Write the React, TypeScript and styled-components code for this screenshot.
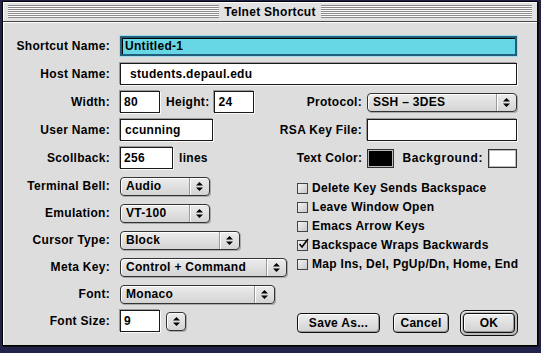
import React from "react";
import styled, { createGlobalStyle } from "styled-components";

const GlobalStyle = createGlobalStyle`
  html, body {
    margin: 0;
    padding: 0;
    background: #22234a;
  }
  body {
    width: 541px;
    height: 353px;
    overflow: hidden;
    font-family: "Liberation Sans", Arial, sans-serif;
    font-size: 12px;
    font-weight: bold;
    letter-spacing: 0.3px;
    color: #000;
  }
`;

const Window = styled.div`
  margin: 1px 0 0 2px;
  width: 534px;
  height: 343px;
  background: #dddddd;
  border: 1px solid #000;
  box-shadow: 1px 1px 0 #111;
  display: flex;
  flex-direction: column;
`;

const TitleBar = styled.div`
  height: 19px;
  border-bottom: 1px solid #444;
  background: #e2e2e2;
  display: flex;
  align-items: center;
  gap: 3px;
  padding: 0 5px;
  box-shadow: inset 1px 1px 0 #fff;
`;

const Stripes = styled.div`
  flex: 1;
  height: 13px;
  background: repeating-linear-gradient(to bottom, #8c8c8c 0 1px, #fbfbfb 1px 2px);
`;

const Title = styled.div`
  font-size: 12px;
  padding: 0 2px;
`;

const Content = styled.div`
  flex: 1;
  display: flex;
  flex-direction: column;
  padding: 12px 20px 0 6px;
  gap: 4px;
  box-shadow: inset 1px 1px 0 #fff;
`;

const Row = styled.div`
  height: 24px;
  display: flex;
  align-items: center;
`;

const Label = styled.div`
  width: 101px;
  flex: none;
  text-align: right;
  margin-right: 10px;
  white-space: nowrap;
`;

const InlineLabel = styled.span`
  margin: 0 5px 0 6px;
  white-space: nowrap;
`;

const Field = styled.div<{ $w?: number; $indent?: number; $focus?: boolean }>`
  ${(p) => (p.$w ? `width: ${p.$w}px; flex: none;` : "flex: 1;")}
  height: ${(p) => (p.$focus ? 20 : 22)}px;
  box-sizing: border-box;
  display: flex;
  align-items: center;
  padding-left: ${(p) => p.$indent ?? 3}px;
  background: ${(p) => (p.$focus ? "#67d7e6" : "#fff")};
  border: ${(p) => (p.$focus ? "2px solid #1f5f7c" : "1px solid #1a1a1a")};
  box-shadow: ${(p) => (p.$focus ? "0 0 0 1px #9fdbe8, inset 1px 1px 0 #000" : "1px 1px 0 #fafafa, -1px -1px 0 #9a9a9a")};
  white-space: nowrap;
`;

const RightPair = styled.div`
  margin-left: auto;
  display: flex;
  align-items: center;
  gap: 5px;
`;

const Swatch = styled.div<{ $color: string; $w: number }>`
  width: ${(p) => p.$w}px;
  height: 19px;
  box-sizing: border-box;
  background: ${(p) => p.$color};
  border: 1px solid #333;
  box-shadow: inset 0 0 0 1px #bbb;
`;

const SwatchLabel = styled.span`
  margin-left: 3px;
  letter-spacing: 0.6px;
`;

const Lower = styled.div`
  display: flex;
`;

const LeftCol = styled.div`
  display: flex;
  flex-direction: column;
  gap: 3px;
`;

const RightCol = styled.div`
  margin-left: auto;
  margin-right: -3px;
  width: 223px;
  display: flex;
  flex-direction: column;
  padding-top: 4px;
`;

const Popup = styled.div<{ $w: number }>`
  width: ${(p) => p.$w}px;
  height: 19px;
  box-sizing: border-box;
  border: 1px solid #333;
  border-radius: 4px;
  background: linear-gradient(#ececec, #d4d4d4);
  box-shadow: inset 1px 1px 0 #fff, 1px 1px 0 #aaa;
  display: flex;
  align-items: center;
  white-space: nowrap;
`;

const PopupText = styled.div`
  flex: 1;
  padding-left: 5px;
`;

const ArrowBox = styled.div<{ $plain?: boolean }>`
  width: 19px;
  align-self: stretch;
  border-left: ${(p) => (p.$plain ? "none" : "1px solid #999")};
  box-shadow: ${(p) => (p.$plain ? "none" : "inset 1px 0 0 #fff")};
  display: flex;
  align-items: center;
  justify-content: center;
`;

const Stepper = styled(Popup)`
  margin-left: 6px;
`;

const CheckRow = styled.div`
  height: 19px;
  display: flex;
  align-items: center;
  gap: 4px;
  white-space: nowrap;
`;

const Box = styled.div`
  width: 11px;
  height: 11px;
  box-sizing: border-box;
  border: 1px solid #444;
  background: linear-gradient(135deg, #f4f4f4, #c8c8c8);
  position: relative;
  flex: none;
  margin-top: 1px;
`;

const Buttons = styled.div`
  margin-top: auto;
  margin-bottom: -3px;
  display: flex;
  align-items: center;
`;

const Button = styled.div<{ $w: number; $gap?: number }>`
  width: ${(p) => p.$w}px;
  height: 20px;
  box-sizing: border-box;
  margin-left: ${(p) => p.$gap ?? 0}px;
  border: 1px solid #111;
  border-radius: 4px;
  background: linear-gradient(#eeeeee, #d2d2d2);
  box-shadow: inset 1px 1px 0 #fff, inset -1px -1px 0 #999;
  display: flex;
  align-items: center;
  justify-content: center;
`;

const DefaultRing = styled.div`
  margin-left: 11px;
  padding: 2px;
  border: 1px solid #111;
  border-radius: 6px;
  background: #bdbdbd;
  box-shadow: inset 1px 1px 0 #eee;
`;

const Arrows = () => (
  <svg width="7" height="9" viewBox="0 0 7 9">
    <path d="M3.5 0 L7 3.5 L0 3.5 Z M0 5.5 L7 5.5 L3.5 9 Z" fill="#000" />
  </svg>
);

const Check = () => (
  <svg width="12" height="12" viewBox="0 0 12 12" style={{ position: "absolute", left: 0, top: -3 }}>
    <path d="M1.5 6 L4 9 L10 1" stroke="#000" strokeWidth="1.6" fill="none" />
  </svg>
);

const PopupMenu = ({ w, value }: { w: number; value: string }) => (
  <Popup $w={w}>
    <PopupText>{value}</PopupText>
    <ArrowBox>
      <Arrows />
    </ArrowBox>
  </Popup>
);

const options = [
  { label: "Delete Key Sends Backspace", checked: false },
  { label: "Leave Window Open", checked: false },
  { label: "Emacs Arrow Keys", checked: false },
  { label: "Backspace Wraps Backwards", checked: true },
  { label: "Map Ins, Del, PgUp/Dn, Home, End", checked: false },
];

export default function App() {
  return (
    <>
      <GlobalStyle />
      <Window>
        <TitleBar>
          <Stripes />
          <Title>Telnet Shortcut</Title>
          <Stripes />
        </TitleBar>
        <Content>
          <Row>
            <Label>Shortcut Name:</Label>
            <Field $focus>Untitled-1</Field>
          </Row>
          <Row>
            <Label>Host Name:</Label>
            <Field $indent={9}>students.depaul.edu</Field>
          </Row>
          <Row>
            <Label>Width:</Label>
            <Field $w={40}>80</Field>
            <InlineLabel>Height:</InlineLabel>
            <Field $w={40}>24</Field>
            <RightPair>
              <span>Protocol:</span>
              <PopupMenu w={150} value="SSH – 3DES" />
            </RightPair>
          </Row>
          <Row>
            <Label>User Name:</Label>
            <Field $w={93} $indent={4}>ccunning</Field>
            <RightPair>
              <span>RSA Key File:</span>
              <Field $w={150} />
            </RightPair>
          </Row>
          <Row>
            <Label>Scollback:</Label>
            <Field $w={53}>256</Field>
            <InlineLabel>lines</InlineLabel>
            <RightPair>
              <span>Text Color:</span>
              <Swatch $color="#000" $w={27} />
              <SwatchLabel>Background:</SwatchLabel>
              <Swatch $color="#fff" $w={29} />
            </RightPair>
          </Row>
          <Lower>
            <LeftCol>
              <Row>
                <Label>Terminal Bell:</Label>
                <PopupMenu w={90} value="Audio" />
              </Row>
              <Row>
                <Label>Emulation:</Label>
                <PopupMenu w={90} value="VT-100" />
              </Row>
              <Row>
                <Label>Cursor Type:</Label>
                <PopupMenu w={120} value="Block" />
              </Row>
              <Row>
                <Label>Meta Key:</Label>
                <PopupMenu w={167} value="Control + Command" />
              </Row>
              <Row>
                <Label>Font:</Label>
                <PopupMenu w={155} value="Monaco" />
              </Row>
              <Row>
                <Label>Font Size:</Label>
                <Field $w={40}>9</Field>
                <Stepper $w={20}>
                  <ArrowBox $plain>
                    <Arrows />
                  </ArrowBox>
                </Stepper>
              </Row>
            </LeftCol>
            <RightCol>
              {options.map((o) => (
                <CheckRow key={o.label}>
                  <Box>{o.checked && <Check />}</Box>
                  {o.label}
                </CheckRow>
              ))}
              <Buttons>
                <Button $w={83}>Save As...</Button>
                <Button $w={56} $gap={13}>Cancel</Button>
                <DefaultRing>
                  <Button $w={52}>OK</Button>
                </DefaultRing>
              </Buttons>
            </RightCol>
          </Lower>
        </Content>
      </Window>
    </>
  );
}
